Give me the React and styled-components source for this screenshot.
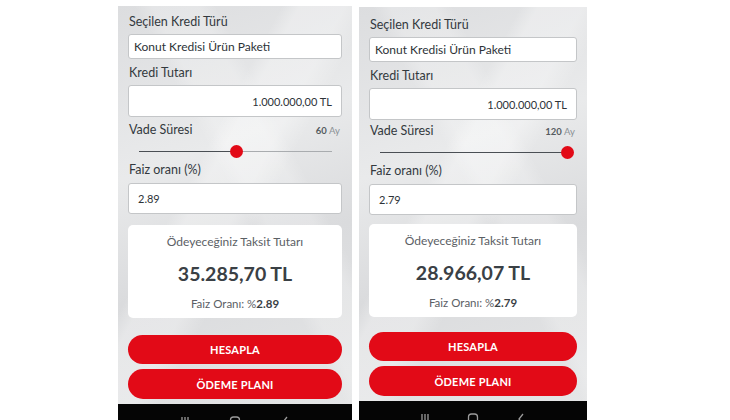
import React from 'react';
import styled, { createGlobalStyle } from 'styled-components';

const GlobalStyle = createGlobalStyle`
  * {
    margin: 0;
    padding: 0;
    box-sizing: border-box;
  }
  html, body {
    width: 730px;
    height: 420px;
    overflow: hidden;
    background: #ffffff;
    font-family: 'Lato', 'Noto Sans', sans-serif;
  }
`

const Page = styled.div`
  display: flex;
  flex-flow: row nowrap;
  align-items: flex-start;
  gap: 7px;
  padding-left: 118px;
  height: 420px;
`

const Phone = styled.div`
  width: ${p => p.$width}px;
  height: ${p => 420 - p.$top}px;
  margin-top: ${p => p.$top}px;
  display: flex;
  flex-flow: column nowrap;
  padding: ${p => p.$pad}px 10px 0 10px;
  overflow: hidden;
  background:
    linear-gradient(118deg, transparent 0 36%, rgba(255,255,255,0.3) 40% 50%, transparent 56%),
    linear-gradient(62deg, transparent 0 52%, rgba(255,255,255,0.22) 56% 66%, transparent 70%),
    linear-gradient(160deg, #dcdddf 0%, #e9eaeb 35%, #dadbdd 60%, #e6e7e8 100%);

  & > * {
    flex-shrink: 0;
  }
`

const Label = styled.div`
  font-size: 12.5px;
  line-height: 18px;
  color: #33393e;
  margin-top: ${p => p.$mt || 0}px;
  padding-left: 1px;
`

const Field = styled.div`
  height: ${p => p.$h}px;
  margin-top: ${p => p.$mt || 3}px;
  background: #ffffff;
  border: 1px solid #c4c6c8;
  border-radius: 3px;
  display: flex;
  align-items: center;
  justify-content: ${p => (p.$right ? 'flex-end' : 'flex-start')};
  padding: 0 ${p => (p.$right ? 9 : 5)}px 0 ${p => p.$indent || 5}px;
  font-size: ${p => p.$fs || 12}px;
  color: #2d3338;
`

const VadeRow = styled.div`
  display: flex;
  justify-content: space-between;
  align-items: center;
  margin-top: ${p => p.$mt}px;
  height: 18px;
`

const Months = styled.span`
  font-size: 9.5px;
  color: #555b60;
  font-weight: 700;
  padding-right: 2px;
  span {
    font-weight: 400;
    color: #8b9095;
  }
`

const Slider = styled.div`
  position: relative;
  height: 20px;
  margin: 2px 10px 0 11px;
`

const Track = styled.div`
  position: absolute;
  left: 0;
  right: 0;
  top: 10px;
  height: 1px;
  background: #a9acaf;
`

const Filled = styled.div`
  position: absolute;
  left: 0;
  top: 9.5px;
  height: 1.5px;
  background: #4a4f54;
`

const Thumb = styled.div`
  position: absolute;
  top: 4px;
  width: 13px;
  height: 13px;
  margin-left: -6px;
  border-radius: 50%;
  background: #e20a17;
`

const Card = styled.div`
  height: 93px;
  margin-top: ${p => p.$mt}px;
  background: #ffffff;
  border-radius: 5px;
  display: flex;
  flex-flow: column nowrap;
  align-items: center;
  padding-top: 10px;
`

const CardTitle = styled.div`
  font-size: 12px;
  color: #5b6065;
  line-height: 14px;
`

const CardAmount = styled.div`
  font-size: 19.5px;
  font-weight: 700;
  color: #3a4045;
  margin-top: 13px;
  line-height: 24px;
`

const CardRate = styled.div`
  font-size: 11.5px;
  color: #5b6065;
  margin-top: 11px;
  b {
    font-weight: 700;
    color: #3a4045;
  }
`

const RedButton = styled.div`
  height: ${p => p.$h}px;
  margin-top: ${p => p.$mt}px;
  background: #e20a17;
  border-radius: 16px;
  display: flex;
  align-items: center;
  justify-content: center;
  color: #ffffff;
  font-weight: 700;
  font-size: 11px;
  letter-spacing: 0.2px;
`

const NavBar = styled.div`
  height: 30px;
  margin: 5px -10px 0 -10px;
  background: #050505;
  display: flex;
  justify-content: space-around;
  padding: 10px 42px 0 42px;
`

const NavIcon = styled.svg`
  width: 12px;
  height: 12px;
`

function Panel({ data }) {
  return (
    <Phone $width={data.width} $top={data.top} $pad={data.pad}>
      <Label>Seçilen Kredi Türü</Label>
      <Field $h={25}>Konut Kredisi Ürün Paketi</Field>
      <Label $mt={5}>Kredi Tutarı</Label>
      <Field $h={32} $right $fs={11}>1.000.000,00 TL</Field>
      <VadeRow $mt={data.vadeGap}>
        <Label>Vade Süresi</Label>
        <Months>{data.months} <span>Ay</span></Months>
      </VadeRow>
      <Slider>
        <Track />
        <Filled style={{ width: `${data.progress}%` }} />
        <Thumb style={{ left: `${data.progress}%` }} />
      </Slider>
      <Label>Faiz oranı (%)</Label>
      <Field $h={31} $fs={11} $indent={9} $mt={4}>{data.rate}</Field>
      <Card $mt={data.cardGap}>
        <CardTitle>Ödeyeceğiniz Taksit Tutarı</CardTitle>
        <CardAmount>{data.amount}</CardAmount>
        <CardRate>Faiz Oranı: %<b>{data.rate}</b></CardRate>
      </Card>
      <RedButton $h={29} $mt={data.btnGap}>HESAPLA</RedButton>
      <RedButton $h={30} $mt={5}>ÖDEME PLANI</RedButton>
      <NavBar>
        <NavIcon viewBox="0 0 12 12">
          <path d="M3 3v9M6 3v9M9 3v9" stroke="#9a9a9a" strokeWidth="1.3" fill="none" />
        </NavIcon>
        <NavIcon viewBox="0 0 12 12">
          <rect x="1.5" y="3" width="9" height="10" rx="3" stroke="#9a9a9a" strokeWidth="1.3" fill="none" />
        </NavIcon>
        <NavIcon viewBox="0 0 12 12">
          <path d="M8 3L4 8l4 5" stroke="#9a9a9a" strokeWidth="1.3" fill="none" />
        </NavIcon>
      </NavBar>
    </Phone>
  );
}

const panels = [
  { width: 234, top: 6, pad: 7, months: 60, progress: 50, rate: '2.89', amount: '35.285,70 TL', vadeGap: 4, cardGap: 11, btnGap: 17 },
  { width: 228, top: 7, pad: 9, months: 120, progress: 100, rate: '2.79', amount: '28.966,07 TL', vadeGap: 2, cardGap: 9, btnGap: 15 },
];

export default function App() {
  return (
    <>
      <GlobalStyle />
      <Page>
        {panels.map((p, i) => (
          <Panel key={i} data={p} />
        ))}
      </Page>
    </>
  );
}
